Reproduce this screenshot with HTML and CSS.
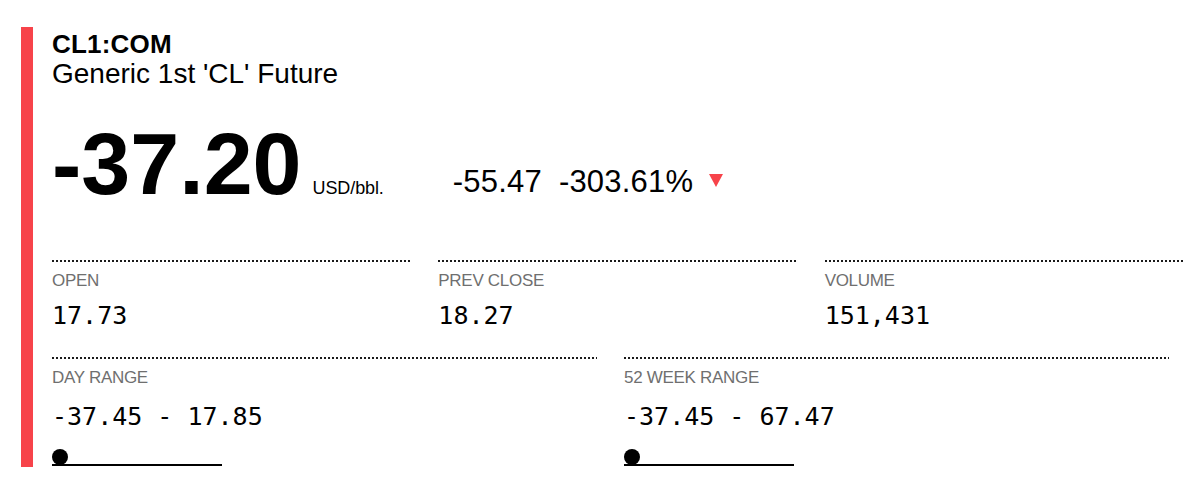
FILE: index.html
```html
<!DOCTYPE html>
<html>
<head>
<meta charset="utf-8">
<link rel="stylesheet" href="styles.css">
</head>
<body>
<div class="card">
  <div class="bar"></div>
  <div class="content">
    <div class="ticker">CL1:COM</div>
    <div class="name">Generic 1st 'CL' Future</div>
    <div class="price-row">
      <span class="price">-37.20</span>
      <span class="unit">USD/bbl.</span>
      <span class="change">-55.47</span>
      <span class="change pct">-303.61%</span>
      <span class="tri"></span>
    </div>
    <div class="stats three">
      <div class="stat">
        <div class="label">OPEN</div>
        <div class="value">17.73</div>
      </div>
      <div class="stat">
        <div class="label">PREV CLOSE</div>
        <div class="value">18.27</div>
      </div>
      <div class="stat">
        <div class="label">VOLUME</div>
        <div class="value">151,431</div>
      </div>
    </div>
    <div class="stats two">
      <div class="stat">
        <div class="label">DAY RANGE</div>
        <div class="value">-37.45 - 17.85</div>
        <div class="slider"><span class="knob"></span></div>
      </div>
      <div class="stat">
        <div class="label">52 WEEK RANGE</div>
        <div class="value">-37.45 - 67.47</div>
        <div class="slider"><span class="knob"></span></div>
      </div>
    </div>
  </div>
</div>
</body>
</html>
```

FILE: styles.css
```css
html, body {
  margin: 0;
  padding: 0;
  background: #fff;
}
body {
  font-family: "Liberation Sans", Arial, sans-serif;
  color: #000;
  width: 1200px;
  height: 491px;
  overflow: hidden;
}
.card {
  display: flex;
  margin: 27px 0 0 21px;
}
.bar {
  width: 12px;
  background: #f7434a;
  flex: none;
}
.content {
  padding: 3px 0 1px 19px;
  width: 1131px;
}
.ticker {
  font-size: 26px;
  font-weight: bold;
  line-height: 28px;
  letter-spacing: 0.2px;
}
.name {
  font-size: 28px;
  line-height: 31px;
}
.price-row {
  display: flex;
  align-items: baseline;
  margin-top: 31px;
}
.price {
  font-size: 88px;
  font-weight: bold;
  line-height: 88px;
}
.unit {
  font-size: 18px;
  margin-left: 11px;
  letter-spacing: -0.1px;
}
.change {
  font-size: 31px;
  margin-left: 69px;
  letter-spacing: 0.2px;
  position: relative;
  top: -2px;
}
.change.pct {
  margin-left: 17px;
}
.tri {
  width: 0;
  height: 0;
  border-left: 7.5px solid transparent;
  border-right: 7.5px solid transparent;
  border-top: 13px solid #f7434a;
  margin-left: 16px;
  position: relative;
  top: -7px;
}
.stats {
  display: grid;
}
.stats.three {
  grid-template-columns: repeat(3, 1fr);
  column-gap: 28px;
  margin-top: 52px;
}
.stats.two {
  grid-template-columns: 545px 545px;
  column-gap: 27px;
  margin-top: 26px;
}
.stat {
  padding-top: 11px;
  background-image: linear-gradient(to right, #1a1a1a 0 2px, transparent 2px 4px);
  background-size: 4px 2px;
  background-repeat: repeat-x;
  background-position: 0 0;
}
.label {
  font-size: 17px;
  line-height: 20px;
  color: #6f6f6f;
  letter-spacing: -0.3px;
}
.value {
  font-family: "DejaVu Sans Mono", monospace;
  font-size: 25px;
  line-height: 30px;
  margin-top: 10px;
}
.stats.two .value {
  margin-top: 14px;
}
.slider {
  position: relative;
  width: 170px;
  height: 18px;
  margin-top: 16px;
  border-bottom: 2px solid #000;
  box-sizing: border-box;
}
.knob {
  position: absolute;
  left: 0;
  bottom: -1px;
  width: 16px;
  height: 16px;
  border-radius: 50%;
  background: #000;
}
```
